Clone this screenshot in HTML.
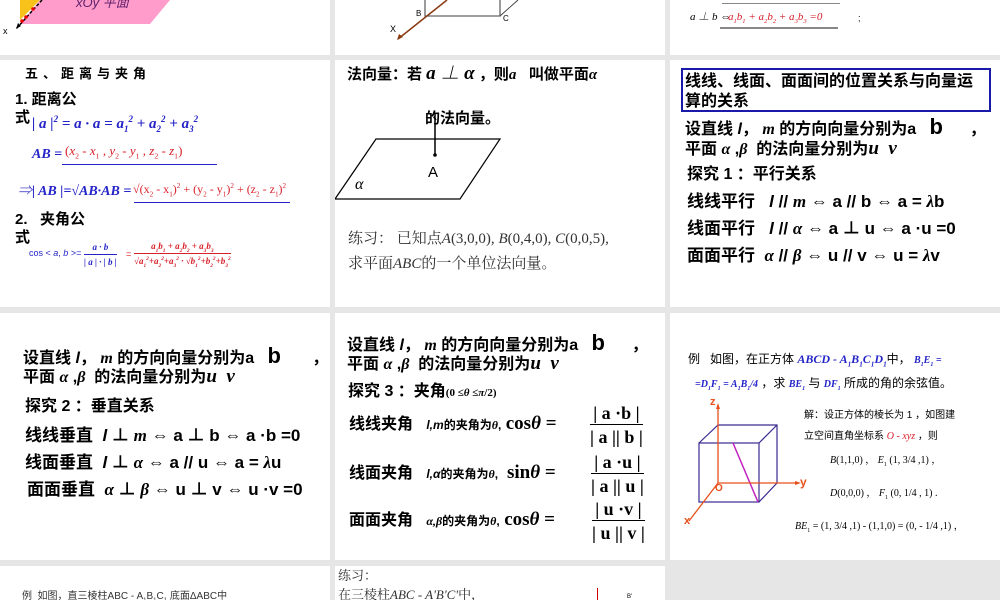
<!DOCTYPE html>
<html><head><meta charset="utf-8"><style>
body{margin:0;width:1000px;height:600px;overflow:hidden;background:#e6e6e6;position:relative;font-family:"Liberation Sans","Noto Sans CJK SC",sans-serif;}
.s{position:absolute;background:#fff;overflow:hidden}
.t{position:absolute;white-space:nowrap;line-height:1}
.b{font-weight:bold}
.i{font-style:italic}
.ser{font-family:"Liberation Serif","Noto Serif CJK SC",serif}
.blue{color:#2424c8}.red{color:#d8202a}
sub,sup{font-size:60%;line-height:0}
.big{font-size:22px;line-height:0}
.fr{position:absolute;text-align:center;font-family:"Liberation Serif",serif;font-weight:bold;font-size:18px;line-height:1}
.fr .n{border-bottom:1.5px solid #000;padding:0 2px 2px}
.fr .d{padding-top:3px}
</style></head><body>

<!-- row 1 -->
<div class="s" style="left:0;top:0;width:330px;height:55px">
<svg width="330" height="55" style="position:absolute;left:0;top:0">
<polygon points="40,0 170,0 150,24 20,24" fill="#ff9ccc"/>
<polygon points="20,0 40,0 20,20" fill="#f7c21a"/>
<line x1="42" y1="0" x2="16" y2="29" stroke="#000" stroke-width="1.5" stroke-dasharray="3,2"/>
<circle cx="33" cy="9" r="1.8" fill="#e00"/><circle cx="26" cy="17" r="1.8" fill="#e00"/><circle cx="22" cy="21" r="1.8" fill="#e00"/>
<polygon points="16,29 18,23 21,26" fill="#000"/>
</svg>
<div class="t i" style="left:76px;top:-4px;font-size:13px;color:#60206a">xOy 平面</div>
<div class="t" style="left:3px;top:27px;font-size:9px">x</div>
</div>

<div class="s" style="left:335px;top:0;width:330px;height:55px">
<svg width="330" height="55" style="position:absolute;left:0;top:0">
<polyline points="90,0 90,16 165,16 165,0" fill="none" stroke="#666" stroke-width="1.3"/>
<line x1="165" y1="16" x2="183" y2="0" stroke="#444"/>
<line x1="112" y1="0" x2="63" y2="39" stroke="#8b3a10" stroke-width="1.5"/>
<polygon points="62,40 64,34 68,37" fill="#8b3a10"/>
</svg>
<div class="t" style="left:81px;top:10px;font-size:8px">B</div>
<div class="t" style="left:55px;top:25px;font-size:9px">X</div>
<div class="t" style="left:168px;top:15px;font-size:8px">C</div>
</div>

<div class="s" style="left:670px;top:0;width:330px;height:55px">
<div style="position:absolute;left:52px;top:3px;width:118px;border-top:1px solid #888"></div>
<div class="t ser i" style="left:20px;top:12px;font-size:11px">a ⊥ b ⇔</div>
<div class="t ser i red" style="left:58px;top:12px;font-size:11px">a<sub>1</sub>b<sub>1</sub> + a<sub>2</sub>b<sub>2</sub> + a<sub>3</sub>b<sub>3</sub> =0</div>
<div class="t" style="left:188px;top:14px;font-size:9px">;</div>
<div style="position:absolute;left:50px;top:27px;width:118px;border-top:2px solid #888"></div>
</div>

<!-- row 2 -->
<div class="s" style="left:0;top:60px;width:330px;height:247px">
<div class="t b" style="left:25px;top:7px;font-size:13px;letter-spacing:5px">五、距离与夹角</div>
<div class="t b" style="left:15px;top:32px;font-size:15px">1. 距离公</div>
<div class="t b" style="left:15px;top:50px;font-size:15px">式</div>
<div class="t ser i b blue" style="left:32px;top:57px;font-size:15px">| a |<sup>2</sup> = a · a = a<sub>1</sub><sup>2</sup> + a<sub>2</sub><sup>2</sup> + a<sub>3</sub><sup>2</sup></div>
<div class="t ser i b blue" style="left:32px;top:88px;font-size:14px">AB =</div>
<div class="t ser red" style="left:65px;top:84px;font-size:13px">(<i>x</i><sub>2</sub> - <i>x</i><sub>1</sub> , <i>y</i><sub>2</sub> - <i>y</i><sub>1</sub> , <i>z</i><sub>2</sub> - <i>z</i><sub>1</sub>)</div>
<div style="position:absolute;left:62px;top:104px;width:155px;border-top:1px solid #2424c8"></div>
<div class="t ser i b blue" style="left:18px;top:125px;font-size:14px">⇒| AB |=√AB·AB =</div>
<div class="t ser red" style="left:133px;top:123px;font-size:12px">√(x<sub>2</sub> - x<sub>1</sub>)<sup>2</sup> + (y<sub>2</sub> - y<sub>1</sub>)<sup>2</sup> + (z<sub>2</sub> - z<sub>1</sub>)<sup>2</sup></div>
<div style="position:absolute;left:134px;top:142px;width:156px;border-top:1px solid #2424c8"></div>
<div class="t b" style="left:15px;top:152px;font-size:15px">2.&nbsp;&nbsp; 夹角公</div>
<div class="t b" style="left:15px;top:170px;font-size:15px">式</div>
<div class="t blue" style="left:29px;top:189px;font-size:9px">cos &lt; <i>a</i>, <i>b</i> &gt;=</div>
<div class="fr blue" style="left:84px;top:183px;font-size:9px;font-style:italic"><div class="n" style="border-color:#2424c8;border-width:1px">a · b</div><div class="d">| a | · | b |</div></div>
<div class="t red" style="left:126px;top:190px;font-size:9px">=</div>
<div class="fr red" style="left:134px;top:182px;font-size:9px;font-style:italic"><div class="n" style="border-color:#d8202a;border-width:1px">a<sub>1</sub>b<sub>1</sub> + a<sub>2</sub>b<sub>2</sub> + a<sub>3</sub>b<sub>3</sub></div><div class="d">√a<sub>1</sub><sup>2</sup>+a<sub>2</sub><sup>2</sup>+a<sub>3</sub><sup>2</sup> · √b<sub>1</sub><sup>2</sup>+b<sub>2</sub><sup>2</sup>+b<sub>3</sub><sup>2</sup></div></div>
</div>

<div class="s" style="left:335px;top:60px;width:330px;height:247px">
<div class="t b" style="left:12px;top:7px;font-size:15px">法向量：若 <span class="ser i" style="font-size:19px;line-height:0">a ⊥ α</span> ，则<span class="ser i">a</span>&nbsp;&nbsp; 叫做平面<span class="ser i">α</span></div>
<svg width="330" height="247" style="position:absolute;left:0;top:0">
<polygon points="41,79 165,79 125,139 0,139" fill="none" stroke="#000" stroke-width="1.2"/>
<line x1="100" y1="95" x2="100" y2="53" stroke="#000" stroke-width="1.5"/>
<circle cx="100" cy="95" r="1.8" fill="#000"/>
</svg>
<div class="t b" style="left:90px;top:51px;font-size:15px">的法向量。</div>
<div class="t" style="left:93px;top:105px;font-size:15px">A</div>
<div class="t ser i" style="left:20px;top:117px;font-size:16px">α</div>
<div class="t ser" style="left:13px;top:172px;font-size:15px;color:#333">练习：&nbsp;已知点<i>A</i>(3,0,0), <i>B</i>(0,4,0), <i>C</i>(0,0,5),</div>
<div class="t ser" style="left:13px;top:197px;font-size:15px;color:#333">求平面<i>ABC</i>的一个单位法向量。</div>
</div>

<div class="s" style="left:670px;top:60px;width:330px;height:247px">
<div style="position:absolute;left:11px;top:8px;width:306px;height:40px;border:2px solid #1a1aa8"></div>
<div class="t b" style="left:15px;top:12px;font-size:16px;line-height:20px;white-space:normal;width:300px">线线、线面、面面间的位置关系与向量运算的关系</div>
<div class="t b" style="left:15px;top:62px;font-size:16px">设直线 <i>l</i>，&nbsp;<i class="ser">m</i> 的方向向量分别为a&nbsp;&nbsp;&nbsp;<span class="big">b</span>&nbsp;&nbsp;&nbsp;&nbsp;&nbsp;&nbsp;，</div>
<div class="t b" style="left:15px;top:82px;font-size:16px">平面 <i class="ser">α</i> ,<i class="ser">β</i>&nbsp; 的法向量分别为<i class="ser" style="font-size:19px;line-height:0">u&nbsp; v</i></div>
<div class="t b" style="left:17px;top:107px;font-size:16px">探究 1 ：平行关系</div>
<div class="t b" style="left:17px;top:133px;font-size:17px">线线平行&nbsp;&nbsp; <i>l</i> // <i class="ser">m</i> ⇔ a // b ⇔ a = <i class="ser">λ</i>b</div>
<div class="t b" style="left:17px;top:160px;font-size:17px">线面平行&nbsp;&nbsp; <i>l</i> // <i class="ser">α</i> ⇔ a ⊥ u ⇔ a ·u =0</div>
<div class="t b" style="left:17px;top:187px;font-size:17px">面面平行&nbsp; <i class="ser">α</i> // <i class="ser">β</i> ⇔ u // v ⇔ u = <i class="ser">λ</i>v</div>
</div>

<!-- row 3 -->
<div class="s" style="left:0;top:313px;width:330px;height:247px">
<div class="t b" style="left:23px;top:38px;font-size:16px">设直线 <i>l</i>，&nbsp;<i class="ser">m</i> 的方向向量分别为a&nbsp;&nbsp;&nbsp;<span class="big">b</span>&nbsp;&nbsp;&nbsp;&nbsp;&nbsp;&nbsp;&nbsp;，</div>
<div class="t b" style="left:23px;top:57px;font-size:16px">平面 <i class="ser">α</i> ,<i class="ser">β</i>&nbsp; 的法向量分别为<i class="ser" style="font-size:19px;line-height:0">u&nbsp; v</i></div>
<div class="t b" style="left:25px;top:86px;font-size:16px">探究 2 ：垂直关系</div>
<div class="t b" style="left:25px;top:114px;font-size:17px">线线垂直&nbsp; <i>l</i> ⊥ <i class="ser">m</i> ⇔ a ⊥ b ⇔ a ·b =0</div>
<div class="t b" style="left:25px;top:141px;font-size:17px">线面垂直&nbsp; <i>l</i> ⊥ <i class="ser">α</i> ⇔ a // u ⇔ a = <i class="ser">λ</i>u</div>
<div class="t b" style="left:27px;top:168px;font-size:17px">面面垂直&nbsp; <i class="ser">α</i> ⊥ <i class="ser">β</i> ⇔ u ⊥ v ⇔ u ·v =0</div>
</div>

<div class="s" style="left:335px;top:313px;width:330px;height:247px">
<div class="t b" style="left:12px;top:25px;font-size:16px">设直线 <i>l</i>，&nbsp;<i class="ser">m</i> 的方向向量分别为a&nbsp;&nbsp;&nbsp;<span class="big">b</span>&nbsp;&nbsp;&nbsp;&nbsp;&nbsp;&nbsp;，</div>
<div class="t b" style="left:12px;top:44px;font-size:16px">平面 <i class="ser">α</i> ,<i class="ser">β</i>&nbsp; 的法向量分别为<i class="ser" style="font-size:19px;line-height:0">u&nbsp; v</i></div>
<div class="t b" style="left:13px;top:71px;font-size:16px">探究 3 ：夹角<span class="ser" style="font-size:11px">(0 ≤<i>θ</i> ≤<i>π</i>/2)</span></div>
<div class="t b" style="left:14px;top:104px;font-size:16px">线线夹角&nbsp;&nbsp; <i style="font-size:12px">l,m</i><span style="font-size:12px">的夹角为<i class="ser">θ</i>,</span> <span class="ser" style="font-size:19px;line-height:0">cos<i>θ</i> =</span></div>
<div class="fr" style="left:255px;top:91px"><div class="n">| a ·b |</div><div class="d">| a || b |</div></div>
<div class="t b" style="left:14px;top:153px;font-size:16px">线面夹角&nbsp;&nbsp; <i style="font-size:12px">l,α</i><span style="font-size:12px">的夹角为<i class="ser">θ</i>,</span>&nbsp; <span class="ser" style="font-size:19px;line-height:0">sin<i>θ</i> =</span></div>
<div class="fr" style="left:256px;top:140px"><div class="n">| a ·u |</div><div class="d">| a || u |</div></div>
<div class="t b" style="left:14px;top:200px;font-size:16px">面面夹角&nbsp;&nbsp; <i class="ser" style="font-size:12px">α,β</i><span style="font-size:12px">的夹角为<i class="ser">θ</i>,</span> <span class="ser" style="font-size:19px;line-height:0">cos<i>θ</i> =</span></div>
<div class="fr" style="left:257px;top:187px"><div class="n">| u ·v |</div><div class="d">| u || v |</div></div>
</div>

<div class="s" style="left:670px;top:313px;width:330px;height:247px">
<div class="t" style="left:18px;top:40px;font-size:12px">例&nbsp;&nbsp; 如图，在正方体 <i class="ser b blue">ABCD - A<sub>1</sub>B<sub>1</sub>C<sub>1</sub>D<sub>1</sub></i>中，&nbsp;<i class="ser b blue" style="font-size:10px">B<sub>1</sub>E<sub>1</sub> =</i></div>
<div class="t" style="left:25px;top:64px;font-size:12px"><i class="ser b blue" style="font-size:10px">=D<sub>1</sub>F<sub>1</sub> = A<sub>1</sub>B<sub>1</sub>/4</i>&nbsp;，求 <i class="ser b blue" style="font-size:10px">BE<sub>1</sub></i> 与 <i class="ser b blue" style="font-size:10px">DF<sub>1</sub></i> 所成的角的余弦值。</div>
<svg width="330" height="247" style="position:absolute;left:0;top:0">
<g stroke="#3a2a90" fill="none" stroke-width="1.2">
<rect x="29" y="130" width="60" height="59"/>
<polyline points="29,130 48,112 107,112 107,170 89,189"/>
<line x1="89" y1="130" x2="107" y2="112"/>
</g>
<line x1="63" y1="130" x2="88" y2="189" stroke="#c020c0" stroke-width="1.5"/>
<g stroke="#e8501a" stroke-width="1.3">
<line x1="48" y1="170" x2="48" y2="93"/>
<line x1="48" y1="170" x2="128" y2="170"/>
<line x1="48" y1="170" x2="19" y2="208"/>
</g>
<polygon points="48,90 46,96 50,96" fill="#e8501a"/>
<polygon points="131,170 125,168 125,172" fill="#e8501a"/>
</svg>
<div class="t b" style="left:40px;top:84px;font-size:11px;color:#e8501a">z</div>
<div class="t b" style="left:130px;top:163px;font-size:12px;color:#e8501a">y</div>
<div class="t b" style="left:14px;top:203px;font-size:11px;color:#e8501a">x</div>
<div class="t b" style="left:45px;top:171px;font-size:10px;color:#e8501a">O</div>
<div class="t" style="left:134px;top:98px;font-size:10px">解：设正方体的棱长为 1 ，如图建</div>
<div class="t" style="left:134px;top:119px;font-size:10px">立空间直角坐标系 <i class="ser red">O - xyz</i> ，则</div>
<div class="t ser" style="left:160px;top:143px;font-size:10px"><i>B</i>(1,1,0) ， <i>E</i><sub>1</sub> (1, 3/4 ,1) ，</div>
<div class="t ser" style="left:160px;top:176px;font-size:10px"><i>D</i>(0,0,0) ， <i>F</i><sub>1</sub> (0, 1/4 , 1) .</div>
<div class="t ser" style="left:125px;top:209px;font-size:10px"><i>BE</i><sub>1</sub> = (1, 3/4 ,1) - (1,1,0) = (0, - 1/4 ,1) ，</div>
</div>

<!-- row 4 -->
<div class="s" style="left:0;top:566px;width:330px;height:34px">
<div class="t" style="left:22px;top:26px;font-size:10px;color:#333">例&nbsp; 如图，直三棱柱ABC - A<sub>1</sub>B<sub>1</sub>C<sub>1</sub> 底面ΔABC中</div>
</div>
<div class="s" style="left:335px;top:566px;width:330px;height:34px">
<div class="t ser" style="left:3px;top:3px;font-size:13px;color:#333">练习：</div>
<div class="t ser" style="left:3px;top:22px;font-size:13px;color:#333">在三棱柱<i>ABC - A'B'C'</i>中，</div>
<div style="position:absolute;left:262px;top:22px;width:1px;height:12px;background:#c00"></div>
<div class="t" style="left:292px;top:28px;font-size:6px">B'</div>
</div>

</body></html>
